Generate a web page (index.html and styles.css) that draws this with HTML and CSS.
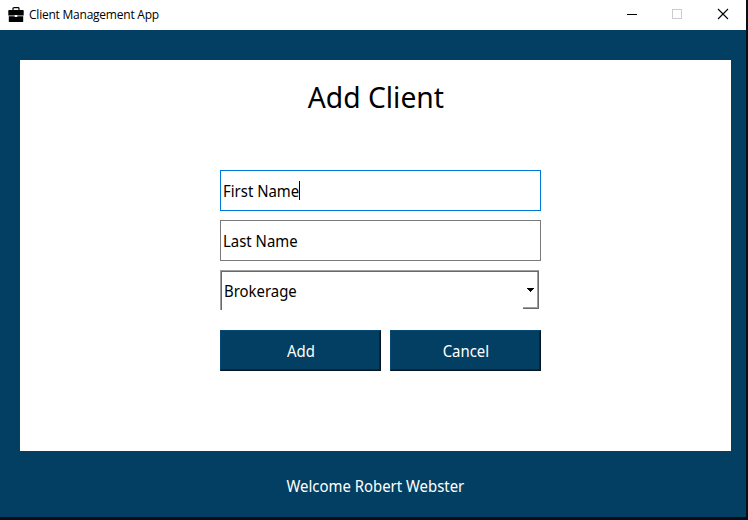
FILE: index.html
```html
<!DOCTYPE html>
<html lang="en">
<head>
<meta charset="utf-8">
<title>Client Management App</title>
<link rel="stylesheet" href="styles.css">
</head>
<body>
<div class="window">
  <header class="titlebar">
    <svg class="app-icon" width="16" height="16" viewBox="0 0 16 16">
      <path d="M5 3V1.500Q5 .7 6 .7h4q1 0 1 .8V3" fill="none" stroke="#000" stroke-width="1.2"/>
      <path d="M1 3h14q.7 0 .7.700V8.500H9.300V8H6.700v.5H.3V3.700Q.3 3 1 3z"/>
      <path d="M.8 9.200h5.900v.8h2.600v-.8h5.900v5.200q0 .6-.7.600h-13q-.7 0-.7-.6z"/>
    </svg>
    <span class="title">Client Management App</span>
    <div class="controls">
      <svg width="46" height="30" viewBox="0 0 46 30" shape-rendering="crispEdges"><path d="M19 14h10v1H19z"/></svg>
      <svg width="46" height="30" viewBox="0 0 46 30" shape-rendering="crispEdges"><path d="M18.500 9.500h9v9h-9z" fill="none" stroke="#ccc"/></svg>
      <svg width="46" height="30" viewBox="0 0 46 30"><path d="M18 9l10 10M28 9L18 19" fill="none" stroke="#000" stroke-width="1.1"/></svg>
    </div>
  </header>
  <main class="content">
    <section class="card">
      <h1><span class="heading">Add Client</span></h1>
      <form class="form">
        <div class="field focused"><span class="label">First Name</span><i class="caret"></i></div>
        <div class="field"><span class="label">Last Name</span></div>
        <div class="combo"><span class="label">Brokerage</span>
          <div class="drop"><svg width="8" height="4" viewBox="0 0 8 4" shape-rendering="crispEdges"><path d="M0 0h7v1H0zM1 1h5v1H1zM2 2h3v1H2zM3 3h1v1H3z"/></svg></div>
        </div>
        <div class="actions">
          <button type="button" class="add"><span class="label centered">Add</span></button>
          <button type="button" class="cancel"><span class="label centered">Cancel</span></button>
        </div>
      </form>
    </section>
    <footer><span class="label centered">Welcome Robert Webster</span></footer>
  </main>
</div>
</body>
</html>
```
FILE: styles.css
```css
* { box-sizing: border-box; }
body {
  margin: 0;
  overflow: hidden;
  font-family: Tahoma, "Noto Sans", sans-serif;
  font-size: 16px;
  color: #000;
}
.window {
  width: 748px;
  height: 520px;
  display: flex;
  flex-direction: column;
  background: #033f63;
  border-right: 2px solid #0b0d14;
  border-bottom: 3px solid #0b0d14;
}
.titlebar {
  height: 30px;
  flex: none;
  display: flex;
  align-items: center;
  padding-left: 8px;
  background: #fff;
}
.app-icon { margin-bottom: 1px; }
.title {
  margin-left: 5px;
  font: 12px/16px "Segoe UI", "Open Sans", sans-serif;
  letter-spacing: -0.23px;
  white-space: nowrap;
}
.controls { display: flex; margin-left: auto; }
.controls svg { display: block; }
.content { flex: 1; padding: 30px 15px 0 20px; }
.card { height: 391px; background: #fff; padding-top: 17px; }
h1 {
  margin: 0;
  height: 40px;
  font-size: 29px;
  line-height: 40px;
  font-weight: 400;
  text-align: center;
}
.heading { display: inline-block; transform: scaleX(0.975); }
.label {
  display: inline-block;
  white-space: nowrap;
  transform: scaleX(0.932);
  transform-origin: left center;
}
.centered { transform-origin: center; }
.form {
  width: 321px;
  margin: 53px 0 0 200px;
  display: flex;
  flex-direction: column;
}
.field {
  height: 41px;
  margin-bottom: 9px;
  padding-left: 2px;
  display: flex;
  align-items: center;
  border: 1px solid #7a7a7a;
}
.focused { border-color: #0078d7; }
.caret { width: 1px; height: 19px; margin-left: -6px; background: #000; }
.combo {
  width: 319px;
  height: 40px;
  padding-left: 3px;
  display: flex;
  align-items: center;
  justify-content: space-between;
  border-top: 1px solid #a0a0a0;
  border-left: 1px solid #a0a0a0;
  box-shadow: inset 1px 1px #696969;
}
.drop {
  width: 16px;
  height: 37px;
  display: flex;
  align-items: center;
  justify-content: center;
  border-right: 1px solid #696969;
  border-bottom: 1px solid #696969;
  box-shadow: inset -1px -1px #a0a0a0;
}
.actions { display: flex; gap: 9px; margin-top: 20px; }
button {
  height: 41px;
  padding: 0;
  font: inherit;
  color: #fff;
  background: #033f63;
  border: 1px solid;
  border-color: #044a75 #011624 #011624 #044a75;
  box-shadow: inset -1px -1px #022a42;
}
.add { width: 161px; }
.cancel { width: 151px; }
footer { height: 70px; line-height: 70px; text-align: center; color: #fff; }
```
